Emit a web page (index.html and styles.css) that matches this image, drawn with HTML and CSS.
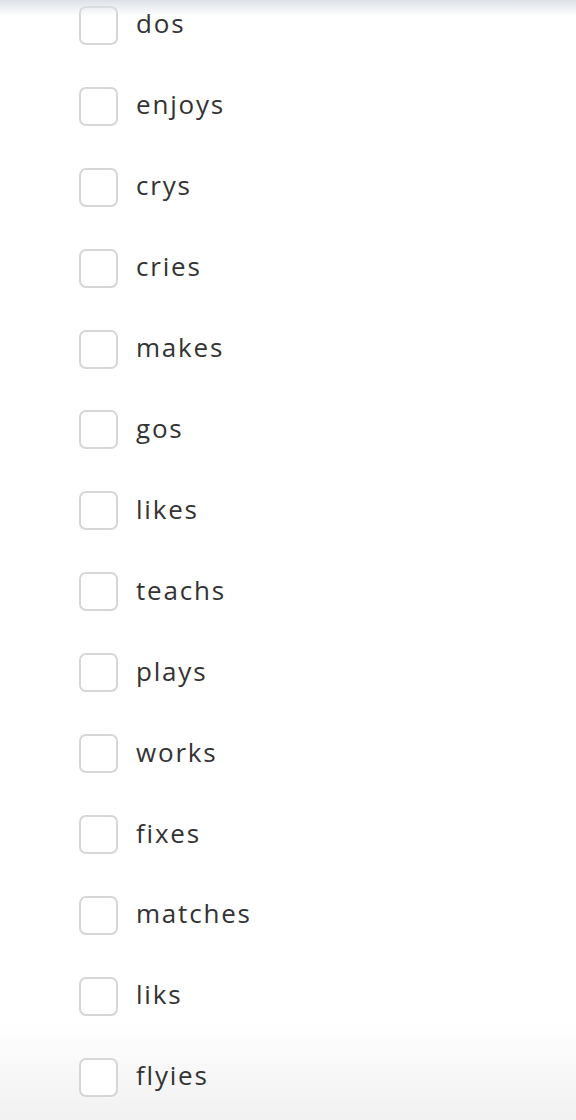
FILE: index.html
```html
<!DOCTYPE html>
<html>
<head>
<meta charset="utf-8">
<link rel="stylesheet" href="styles.css">
</head>
<body>
<div class="top-shadow"></div>
<ul class="options">
  <li class="option"><span class="box"></span><span class="label">dos</span></li>
  <li class="option"><span class="box"></span><span class="label">enjoys</span></li>
  <li class="option"><span class="box"></span><span class="label">crys</span></li>
  <li class="option"><span class="box"></span><span class="label">cries</span></li>
  <li class="option"><span class="box"></span><span class="label">makes</span></li>
  <li class="option"><span class="box"></span><span class="label">gos</span></li>
  <li class="option"><span class="box"></span><span class="label">likes</span></li>
  <li class="option"><span class="box"></span><span class="label">teachs</span></li>
  <li class="option"><span class="box"></span><span class="label">plays</span></li>
  <li class="option"><span class="box"></span><span class="label">works</span></li>
  <li class="option"><span class="box"></span><span class="label">fixes</span></li>
  <li class="option"><span class="box"></span><span class="label">matches</span></li>
  <li class="option"><span class="box"></span><span class="label">liks</span></li>
  <li class="option"><span class="box"></span><span class="label">flyies</span></li>
</ul>
</body>
</html>
```
FILE: styles.css
```css
html, body {
  margin: 0;
  padding: 0;
  width: 576px;
  height: 1120px;
  overflow: hidden;
}
body {
  background: linear-gradient(to bottom, #ffffff 0px, #ffffff 1020px, #f1f1f1 1120px);
  font-family: "Open Sans", Lato, sans-serif;
  color: #333333;
}
.top-shadow {
  position: fixed;
  top: 0;
  left: 0;
  right: 0;
  height: 16px;
  background: linear-gradient(to bottom, #dde1e7 0%, rgba(255,255,255,0) 100%);
  z-index: 2;
}
.options {
  list-style: none;
  margin: -15px 0 0 0;
  padding: 0 0 0 79px;
}
.option {
  display: flex;
  align-items: center;
  gap: 18px;
  height: 80.92px;
}
.box {
  box-sizing: border-box;
  width: 39px;
  height: 39px;
  border: 2px solid #d6d6d6;
  border-radius: 7px;
  background: #fff;
  flex: none;
}
.label {
  font-size: 26px;
  line-height: 1;
  letter-spacing: 1.8px;
  position: relative;
  top: -2px;
}
```
